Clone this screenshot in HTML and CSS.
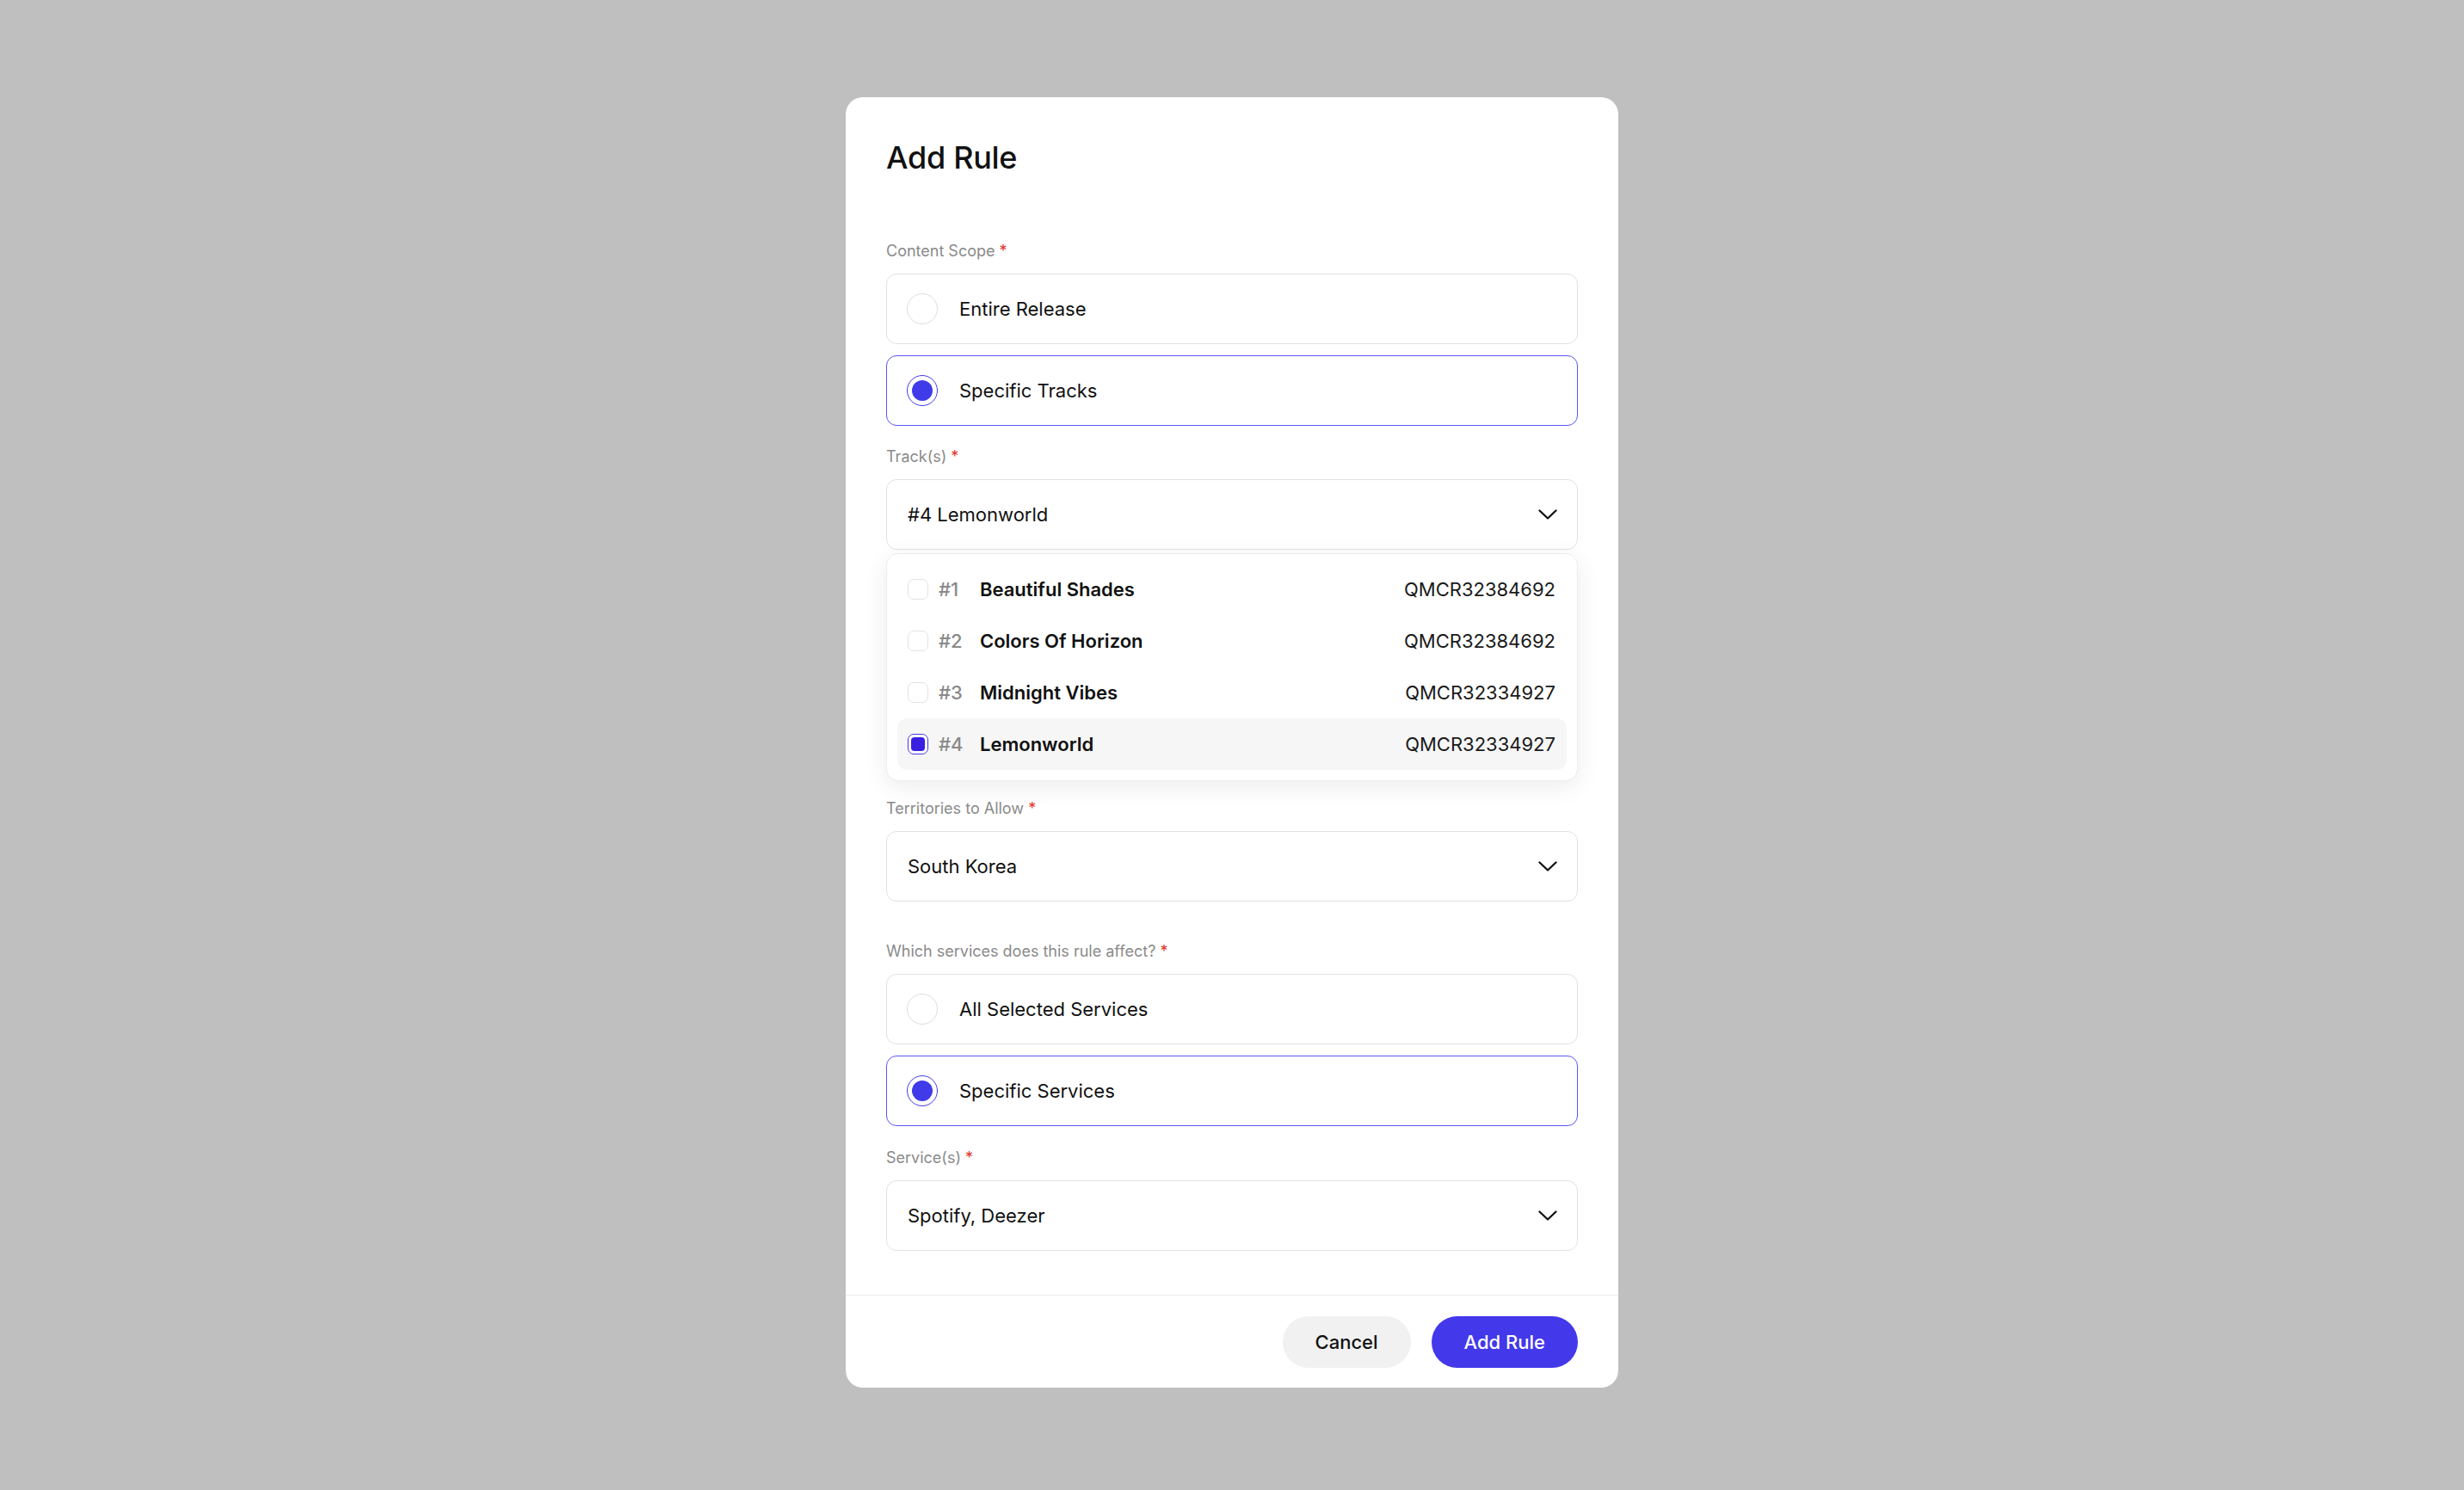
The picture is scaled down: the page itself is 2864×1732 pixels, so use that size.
FILE: index.html
```html
<!DOCTYPE html>
<html>
<head>
    <title>Add Rule</title>
    <meta name="viewport" content="width=device-width, initial-scale=1.0">
    <link rel="stylesheet" href="styles.css">
</head>

<body>
    <div class="modal">
        <div class="modal-body">
            <h2 class="modal-title">Add Rule</h2>

            <form class="rule-form">
                <!-- Escopo do conteúdo -->
                <div class="field">
                    <div class="field-label">Content Scope <span class="req">*</span></div>
                    <div class="option">
                        <span class="radio"></span>
                        <span class="option-text">Entire Release</span>
                    </div>
                    <div class="option is-selected">
                        <span class="radio is-on"><span class="radio-dot"></span></span>
                        <span class="option-text">Specific Tracks</span>
                    </div>
                </div>

                <div class="field field-tracks">
                    <div class="field-label">Track(s) <span class="req">*</span></div>
                    <div class="select">
                        <span class="select-value">#4 Lemonworld</span>
                        <svg class="chevron" width="22" height="12" viewBox="0 0 22 12"><path d="M1.5 1.5 L11 10.5 L20.5 1.5" fill="none" stroke="#111" stroke-width="2.3" stroke-linecap="round" stroke-linejoin="round"/></svg>
                    </div>
                    <ul class="dropdown">
                        <li class="track">
                            <span class="check"></span>
                            <span class="track-num">#1</span>
                            <span class="track-name">Beautiful Shades</span>
                            <span class="track-code">QMCR32384692</span>
                        </li>
                        <li class="track">
                            <span class="check"></span>
                            <span class="track-num">#2</span>
                            <span class="track-name">Colors Of Horizon</span>
                            <span class="track-code">QMCR32384692</span>
                        </li>
                        <li class="track">
                            <span class="check"></span>
                            <span class="track-num">#3</span>
                            <span class="track-name">Midnight Vibes</span>
                            <span class="track-code">QMCR32334927</span>
                        </li>
                        <li class="track is-checked">
                            <span class="check is-on"><span class="check-fill"></span></span>
                            <span class="track-num">#4</span>
                            <span class="track-name">Lemonworld</span>
                            <span class="track-code">QMCR32334927</span>
                        </li>
                    </ul>
                </div>

                <div class="field field-territories">
                    <div class="field-label">Territories to Allow <span class="req">*</span></div>
                    <div class="select">
                        <span class="select-value">South Korea</span>
                        <svg class="chevron" width="22" height="12" viewBox="0 0 22 12"><path d="M1.5 1.5 L11 10.5 L20.5 1.5" fill="none" stroke="#111" stroke-width="2.3" stroke-linecap="round" stroke-linejoin="round"/></svg>
                    </div>
                </div>

                <!-- Serviços -->
                <div class="field field-services">
                    <div class="field-label">Which services does this rule affect? <span class="req">*</span></div>
                    <div class="option">
                        <span class="radio"></span>
                        <span class="option-text">All Selected Services</span>
                    </div>
                    <div class="option is-selected">
                        <span class="radio is-on"><span class="radio-dot"></span></span>
                        <span class="option-text">Specific Services</span>
                    </div>
                </div>

                <div class="field field-service-list">
                    <div class="field-label">Service(s) <span class="req">*</span></div>
                    <div class="select">
                        <span class="select-value">Spotify, Deezer</span>
                        <svg class="chevron" width="22" height="12" viewBox="0 0 22 12"><path d="M1.5 1.5 L11 10.5 L20.5 1.5" fill="none" stroke="#111" stroke-width="2.3" stroke-linecap="round" stroke-linejoin="round"/></svg>
                    </div>
                </div>
            </form>
        </div>

        <div class="modal-footer">
            <button type="button" class="btn btn-cancel">Cancel</button>
            <button type="button" class="btn btn-primary">Add Rule</button>
        </div>
    </div>
</body>
</html>
```

FILE: styles.css
```css
body {
    display: flex;
    align-items: center;
    justify-content: center;
    height: 100vh;
    margin: 0;
    padding-bottom: 6px;
    box-sizing: border-box;
    background: #bfbfbf;
    font-family: Inter, "Liberation Sans", sans-serif;
    color: #111111;
}

.modal {
    width: 898px;
    background: #ffffff;
    border-radius: 20px;
    overflow: hidden;
}

.modal-body {
    padding: 48px 47px 51px;
}

.modal-title {
    margin: 0;
    font-size: 36px;
    line-height: 44px;
    font-weight: 500;
    letter-spacing: -0.3px;
}

.rule-form {
    display: flex;
    flex-direction: column;
    margin-top: 75px;
}

.field-label {
    font-size: 18px;
    line-height: 24px;
    color: #8a8a8a;
    margin-bottom: 14px;
}

.req {
    color: #e5332a;
}

.field-tracks {
    margin-top: 24px;
}

.field-territories {
    margin-top: 20px;
}

.field-services {
    margin-top: 46px;
}

.field-service-list {
    margin-top: 25px;
}

/* opções tipo radio */
.option {
    display: flex;
    align-items: center;
    gap: 25px;
    height: 82px;
    padding: 0 23px;
    box-sizing: border-box;
    border: 1.5px solid #e2e2e2;
    border-radius: 12px;
    font-size: 22px;
}

.option + .option {
    margin-top: 13px;
}

.option.is-selected {
    border-color: #5b56f2;
}

.radio {
    display: flex;
    align-items: center;
    justify-content: center;
    width: 36px;
    height: 36px;
    box-sizing: border-box;
    border: 1.5px solid #dddddd;
    border-radius: 50%;
}

.radio.is-on {
    border-color: #3f3be9;
}

.radio-dot {
    width: 24px;
    height: 24px;
    border-radius: 50%;
    background: #3f3be9;
}

/* selects */
.select {
    display: flex;
    align-items: center;
    justify-content: space-between;
    height: 82px;
    padding: 0 23px 0 24px;
    box-sizing: border-box;
    border: 1.5px solid #e2e2e2;
    border-radius: 12px;
    font-size: 22px;
}

.dropdown {
    list-style: none;
    margin: 4px 0 0;
    padding: 11px 12px 12px;
    border: 1px solid #ececec;
    border-radius: 14px;
    background: #ffffff;
    box-shadow: 0 6px 28px rgba(0, 0, 0, 0.08);
}

.track {
    display: flex;
    align-items: center;
    height: 60px;
    padding: 0 13px 0 12px;
    border-radius: 12px;
    font-size: 22px;
}

.track.is-checked {
    background: #f6f6f6;
}

.check {
    display: flex;
    align-items: center;
    justify-content: center;
    width: 24px;
    height: 24px;
    box-sizing: border-box;
    border: 1.5px solid #e2e2e2;
    border-radius: 7px;
    background: #ffffff;
    margin-right: 12px;
}

.check.is-on {
    border-color: #4a36ea;
}

.check-fill {
    width: 16px;
    height: 16px;
    border-radius: 4px;
    background: #3a1fe0;
}

.track-num {
    width: 48px;
    color: #8a8a8a;
    font-weight: 500;
}

.track-name {
    font-weight: 600;
}

.track-code {
    margin-left: auto;
    color: #1a1a1a;
}

/* rodapé */
.modal-footer {
    display: flex;
    justify-content: flex-end;
    gap: 24px;
    padding: 24px 47px 23px;
    border-top: 1.5px solid #ececec;
}

.btn {
    height: 60px;
    padding: 0 38px;
    border: none;
    border-radius: 30px;
    font-family: Inter, "Liberation Sans", sans-serif;
    font-size: 22px;
    font-weight: 500;
    cursor: pointer;
}

.btn-cancel {
    background: #f1f1f1;
    color: #111111;
}

.btn-primary {
    background: #4338ea;
    color: #ffffff;
}
```
